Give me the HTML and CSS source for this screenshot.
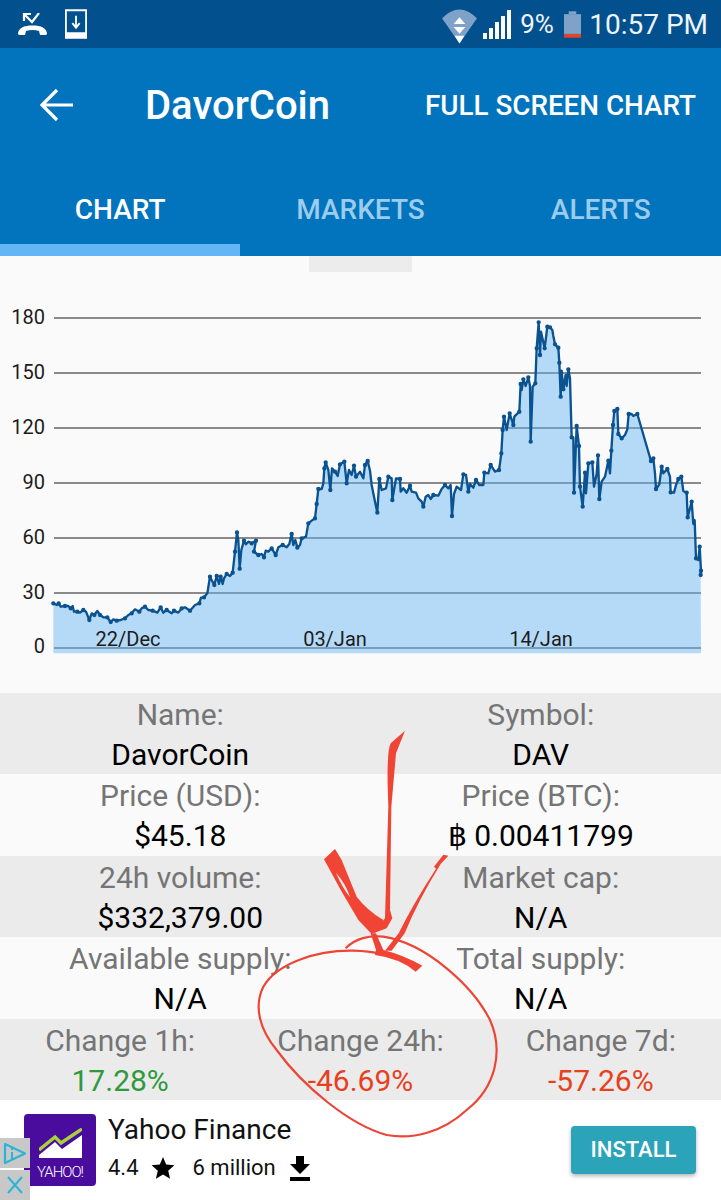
FILE: index.html
```html
<!DOCTYPE html>
<html lang="en">
<head>
<meta charset="utf-8">
<title>DavorCoin</title>
<link rel="stylesheet" href="styles.css">
</head>
<body>
<div class="page">
  <header class="status">
    <div class="status-left">
      <svg class="ic-call" viewBox="0 0 29 22"><path d="M0 21C0 15 6 12.500 14.500 12.500S29 15 29 21L28 22H22L21 18C17 16.500 12 16.500 8 18L7 22H1z" fill="#fff"/><path d="M21 0 14 9 6 1" stroke="#fff" stroke-width="2.200" fill="none"/><path d="M6 8V1h7" stroke="#fff" stroke-width="2.200" fill="none"/></svg>
      <svg class="ic-dl" viewBox="0 0 24 32"><path d="M1 1h22v30H1z" fill="none" stroke="#fff" stroke-width="2"/><path d="M1 25h22v6H1z" fill="#fff"/><path d="M12 7v12M8 15l4 5 4-5" fill="none" stroke="#fff" stroke-width="2"/></svg>
    </div>
    <div class="status-right">
      <svg class="ic-wifi" viewBox="0 0 36 38"><path d="M0 12Q18-6 36 12L18 38z" fill="#7ea2c8"/><path d="M18 11l6 7H12zM12 21h12l-6 7zM13 30h10l-5 8z" fill="#fff"/></svg>
      <svg class="ic-signal" viewBox="0 0 29 29"><path d="M0 23h4v6H0zM6 18h4v11H6zM12 12h4v17h-4zM18 6h4v23h-4zM24 0h4v29h-4z" fill="#fff"/></svg>
      <span class="st-pct">9%</span>
      <svg class="ic-batt" viewBox="0 0 18 28"><path d="M5 0h8v3H5z" fill="#7ea2c8"/><path d="M0 3h18v21H0z" fill="#7ea2c8"/><path d="M0 24h18v4H0z" fill="#e0452c"/></svg>
      <span class="st-time">10:57 PM</span>
    </div>
  </header>

  <section class="appbar">
    <div class="toolbar">
      <svg class="ic-back" viewBox="0 0 34 34"><path d="M33 17H3M17 2 2 17l15 15" fill="none" stroke="#fff" stroke-width="3.200"/></svg>
      <h1 class="title">DavorCoin</h1>
      <span class="action">FULL SCREEN CHART</span>
    </div>
    <nav class="tabs">
      <span class="tab tab-on">CHART</span>
      <span class="tab">MARKETS</span>
      <span class="tab">ALERTS</span>
    </nav>
    <div class="indicator-track"><div class="indicator"></div></div>
  </section>

  <section class="chart-wrap">
    <div class="handle"></div>
    <svg class="chart" viewBox="0 272 721 421">
      <g class="grid">
        <path d="M54 318H701M54 373H701M54 428H701M54 483H701M54 538H701M54 593H701M54 648H701"/>
      </g>
      <g transform="translate(0 300) scale(.33333)">
        <polygon class="area" points="160,1060 160,910 170,915 176,910 182,920 195,918 205,918 212,925 218,918 222,935 232,935 240,938 250,930 258,935 268,960 275,940 283,945 292,933 300,945 310,952 322,952 332,966 340,958 350,962 362,960 375,955 385,945 395,940 405,928 418,935 425,925 435,920 445,930 458,932 472,938 482,922 490,938 500,930 515,940 522,932 535,938 545,925 555,922 570,932 585,915 598,910 603,893 612,892 622,880 630,830 635,840 643,855 650,828 657,852 662,830 668,852 672,835 680,822 690,828 698,818 705,755 711,697 715,720 719,806 724,750 732,722 738,733 745,725 755,730 768,722 762,755 775,765 785,762 792,772 797,752 805,755 815,745 827,765 835,742 848,735 860,742 868,732 875,702 880,735 886,720 892,743 900,735 905,715 918,710 925,670 935,662 945,655 950,612 955,567 965,567 970,550 973,505 977,487 985,510 991,570 996,505 1005,515 1013,528 1020,493 1033,485 1040,550 1047,510 1055,525 1062,497 1068,530 1080,515 1090,535 1095,495 1103,483 1110,512 1115,555 1122,590 1132,638 1138,537 1145,570 1158,565 1165,530 1175,535 1177,600 1188,535 1200,537 1202,575 1210,565 1220,578 1230,557 1235,575 1248,578 1255,595 1265,605 1270,620 1277,590 1285,585 1292,597 1300,585 1315,587 1325,567 1335,555 1345,565 1352,555 1356,648 1362,582 1370,560 1383,570 1390,523 1398,525 1405,575 1410,552 1420,563 1428,540 1438,555 1450,555 1453,518 1465,520 1472,495 1485,515 1497,510 1500,490 1504,460 1508,390 1512,350 1520,390 1529,340 1540,375 1543,350 1558,335 1562,252 1565,270 1570,238 1577,258 1585,232 1590,258 1592,425 1598,260 1606,250 1610,145 1616,67 1620,165 1623,95 1634,145 1642,80 1650,82 1657,90 1660,108 1665,133 1675,143 1678,188 1682,290 1685,212 1690,268 1697,225 1700,258 1705,208 1710,235 1715,412 1720,412 1722,578 1730,378 1737,438 1740,560 1748,620 1755,518 1758,580 1765,490 1777,487 1782,560 1790,522 1794,466 1798,597 1805,545 1815,530 1825,482 1830,520 1834,452 1839,375 1843,333 1852,327 1855,402 1865,415 1875,405 1882,388 1886,342 1895,342 1900,348 1912,342 1953,483 1960,475 1965,520 1968,567 1978,553 1985,500 1990,520 2002,507 2010,530 2012,577 2022,578 2028,555 2035,537 2044,530 2050,573 2060,578 2063,652 2070,625 2075,605 2080,672 2084,660 2088,775 2095,780 2099,740 2103,812 2102,825 2103,1060"/>
        <polyline class="line" points="160,910 170,915 176,910 182,920 195,918 205,918 212,925 218,918 222,935 232,935 240,938 250,930 258,935 268,960 275,940 283,945 292,933 300,945 310,952 322,952 332,966 340,958 350,962 362,960 375,955 385,945 395,940 405,928 418,935 425,925 435,920 445,930 458,932 472,938 482,922 490,938 500,930 515,940 522,932 535,938 545,925 555,922 570,932 585,915 598,910 603,893 612,892 622,880 630,830 635,840 643,855 650,828 657,852 662,830 668,852 672,835 680,822 690,828 698,818 705,755 711,697 715,720 719,806 724,750 732,722 738,733 745,725 755,730 768,722 762,755 775,765 785,762 792,772 797,752 805,755 815,745 827,765 835,742 848,735 860,742 868,732 875,702 880,735 886,720 892,743 900,735 905,715 918,710 925,670 935,662 945,655 950,612 955,567 965,567 970,550 973,505 977,487 985,510 991,570 996,505 1005,515 1013,528 1020,493 1033,485 1040,550 1047,510 1055,525 1062,497 1068,530 1080,515 1090,535 1095,495 1103,483 1110,512 1115,555 1122,590 1132,638 1138,537 1145,570 1158,565 1165,530 1175,535 1177,600 1188,535 1200,537 1202,575 1210,565 1220,578 1230,557 1235,575 1248,578 1255,595 1265,605 1270,620 1277,590 1285,585 1292,597 1300,585 1315,587 1325,567 1335,555 1345,565 1352,555 1356,648 1362,582 1370,560 1383,570 1390,523 1398,525 1405,575 1410,552 1420,563 1428,540 1438,555 1450,555 1453,518 1465,520 1472,495 1485,515 1497,510 1500,490 1504,460 1508,390 1512,350 1520,390 1529,340 1540,375 1543,350 1558,335 1562,252 1565,270 1570,238 1577,258 1585,232 1590,258 1592,425 1598,260 1606,250 1610,145 1616,67 1620,165 1623,95 1634,145 1642,80 1650,82 1657,90 1660,108 1665,133 1675,143 1678,188 1682,290 1685,212 1690,268 1697,225 1700,258 1705,208 1710,235 1715,412 1720,412 1722,578 1730,378 1737,438 1740,560 1748,620 1755,518 1758,580 1765,490 1777,487 1782,560 1790,522 1794,466 1798,597 1805,545 1815,530 1825,482 1830,520 1834,452 1839,375 1843,333 1852,327 1855,402 1865,415 1875,405 1882,388 1886,342 1895,342 1900,348 1912,342 1953,483 1960,475 1965,520 1968,567 1978,553 1985,500 1990,520 2002,507 2010,530 2012,577 2022,578 2028,555 2035,537 2044,530 2050,573 2060,578 2063,652 2070,625 2075,605 2080,672 2084,660 2088,775 2095,780 2099,740 2103,812 2102,825"/>
        <path class="dots" d="M160 910h.1M176 910h.1M195 918h.1M212 925h.1M232 935h.1M250 930h.1M268 960h.1M283 945h.1M300 945h.1M322 952h.1M332 966h.1M350 962h.1M375 955h.1M395 940h.1M418 935h.1M435 920h.1M458 932h.1M482 922h.1M500 930h.1M522 932h.1M545 925h.1M570 932h.1M598 910h.1M612 892h.1M630 830h.1M643 855h.1M650 828h.1M662 830h.1M680 822h.1M698 818h.1M705 755h.1M711 697h.1M719 806h.1M732 722h.1M755 730h.1M768 722h.1M762 755h.1M775 765h.1M792 772h.1M815 745h.1M827 765h.1M848 735h.1M875 702h.1M892 743h.1M905 715h.1M925 670h.1M945 655h.1M950 612h.1M955 567h.1M973 505h.1M977 487h.1M991 570h.1M1005 515h.1M1020 493h.1M1033 485h.1M1040 550h.1M1062 497h.1M1068 530h.1M1095 495h.1M1103 483h.1M1132 638h.1M1138 537h.1M1165 530h.1M1177 600h.1M1200 537h.1M1230 557h.1M1270 620h.1M1300 585h.1M1335 555h.1M1356 648h.1M1390 523h.1M1405 575h.1M1428 540h.1M1453 518h.1M1472 495h.1M1497 510h.1M1504 460h.1M1508 390h.1M1512 350h.1M1529 340h.1M1540 375h.1M1558 335h.1M1562 252h.1M1570 238h.1M1585 232h.1M1592 425h.1M1606 250h.1M1610 145h.1M1616 67h.1M1620 165h.1M1634 145h.1M1642 80h.1M1650 82h.1M1665 133h.1M1675 143h.1M1678 188h.1M1682 290h.1M1690 268h.1M1705 208h.1M1715 412h.1M1722 578h.1M1730 378h.1M1737 438h.1M1740 560h.1M1748 620h.1M1755 518h.1M1765 490h.1M1777 487h.1M1794 466h.1M1798 597h.1M1825 482h.1M1834 452h.1M1839 375h.1M1843 333h.1M1852 327h.1M1855 402h.1M1865 415h.1M1886 342h.1M1912 342h.1M1953 483h.1M1960 475h.1M1968 567h.1M1985 500h.1M2002 507h.1M2012 577h.1M2035 537h.1M2044 530h.1M2060 578h.1M2063 652h.1M2075 605h.1M2088 775h.1M2099 740h.1M2103 812h.1M2102 825h.1"/>
      </g>
      <g class="axis">
        <text x="45" y="324" text-anchor="end">180</text>
        <text x="45" y="379" text-anchor="end">150</text>
        <text x="45" y="434" text-anchor="end">120</text>
        <text x="45" y="489" text-anchor="end">90</text>
        <text x="45" y="544" text-anchor="end">60</text>
        <text x="45" y="599" text-anchor="end">30</text>
        <text x="45" y="653" text-anchor="end">0</text>
        <text x="128" y="646" text-anchor="middle">22/Dec</text>
        <text x="335" y="646" text-anchor="middle">03/Jan</text>
        <text x="541" y="646" text-anchor="middle">14/Jan</text>
      </g>
    </svg>
  </section>

  <section class="stats">
    <div class="row row-grey cols-2">
      <div class="cell"><span class="lbl">Name:</span><span class="val">DavorCoin</span></div>
      <div class="cell"><span class="lbl">Symbol:</span><span class="val">DAV</span></div>
    </div>
    <div class="row cols-2">
      <div class="cell"><span class="lbl">Price (USD):</span><span class="val">$45.18</span></div>
      <div class="cell"><span class="lbl">Price (BTC):</span><span class="val">฿ 0.00411799</span></div>
    </div>
    <div class="row row-grey cols-2">
      <div class="cell"><span class="lbl">24h volume:</span><span class="val">$332,379.00</span></div>
      <div class="cell"><span class="lbl">Market cap:</span><span class="val">N/A</span></div>
    </div>
    <div class="row cols-2">
      <div class="cell"><span class="lbl">Available supply:</span><span class="val">N/A</span></div>
      <div class="cell"><span class="lbl">Total supply:</span><span class="val">N/A</span></div>
    </div>
    <div class="row row-grey cols-3">
      <div class="cell"><span class="lbl">Change 1h:</span><span class="val up">17.28%</span></div>
      <div class="cell"><span class="lbl">Change 24h:</span><span class="val down">-46.69%</span></div>
      <div class="cell"><span class="lbl">Change 7d:</span><span class="val down">-57.26%</span></div>
    </div>
  </section>

  <section class="ad">
    <div class="ad-icon">
      <svg class="ad-chart" viewBox="0 0 43 30"><path d="M0 30V27L16 14l7 7L43 7v23z" fill="#fff"/><path d="M0 22 16 9l6 6L43 1" fill="none" stroke="#a8d13c" stroke-width="3.500"/></svg>
      <span class="ad-brand">YAHOO!</span>
    </div>
    <div class="ad-body">
      <div class="ad-title">Yahoo Finance</div>
      <div class="ad-meta">
        <span>4.4</span>
        <svg class="ad-star" viewBox="0 0 24 24"><path d="M12 1l3.200 7.600 8.200.7-6.200 5.400 1.900 8L12 18.400 4.900 22.700l1.900-8L.6 9.300l8.200-.7z"/></svg>
        <span class="ad-count">6 million</span>
        <svg class="ad-down" viewBox="0 0 20 25"><path d="M6 0h8v8h6L10 18 0 8h6zM0 21h20v4H0z"/></svg>
      </div>
    </div>
    <div class="ad-btn">INSTALL</div>
  </section>

  <div class="adchoice adchoice-i">
    <svg viewBox="0 0 24 23"><path d="M2 2 22 11.500 2 21z" fill="none" stroke="#29b6d6" stroke-width="2.200" stroke-linejoin="round"/><path d="M9 10v7" stroke="#29b6d6" stroke-width="2"/><circle cx="9" cy="7" r="1.200" fill="#29b6d6"/></svg>
  </div>
  <div class="adchoice adchoice-x">
    <svg viewBox="0 0 16 18"><path d="M1 1l14 16M15 1 1 17" fill="none" stroke="#29b6d6" stroke-width="2"/></svg>
  </div>

  <svg class="scribble" viewBox="0 0 721 1200">
    <g transform="translate(240 720) scale(.33333)">
      <path class="ink" d="M495 32 452 70Q441 90 443 200L445 260 435 595 400 640 440 625 457 595 450 570 454 260 468 100z"/>
      <path class="ink" fill-rule="evenodd" d="M252 418 285 387 305 420 350 530Q380 570 430 600L420 630 395 642 355 600Q300 510 252 418zM288 458Q305 500 330 532 320 495 288 458z"/>
      <path class="ink" d="M392 640 408 690 405 705Q480 715 527 755L547 737Q490 705 430 690L408 640z"/>
      <path class="ink" d="M625 407 610 404 582 440 588 446Q520 550 476 640L435 692 455 692 494 640Q535 540 602 432z"/>
      <path class="ring" d="M317 685C345 655 390 645 430 650 560 670 700 800 750 900 790 990 770 1100 680 1170 610 1235 520 1260 440 1245 330 1215 190 1100 110 990 60 930 40 860 70 800 110 730 230 690 340 692 370 693 395 695 415 700"/>
    </g>
  </svg>
</div>
</body>
</html>
```
FILE: styles.css
```css
* { box-sizing: border-box; }
html, body { margin: 0; padding: 0; }
body { background: #fff; font-family: Roboto, "Noto Sans", sans-serif; }
.page { position: relative; width: 721px; height: 1200px; overflow: hidden; }

.status { height: 48px; background: #03508f; display: flex; justify-content: space-between; align-items: center; color: #eef4fa; }
.status-left { display: flex; align-items: center; gap: 18px; padding-left: 18px; }
.ic-call { width: 29px; height: 22px; }
.ic-dl { width: 22px; height: 32px; margin-top: -1px; }
.status-right { display: flex; align-items: center; padding-right: 13px; }
.ic-wifi { width: 35px; height: 38px; margin-right: 6px; margin-top: 2px; }
.ic-signal { width: 29px; height: 29px; margin-top: 1px; }
.st-pct { font-size: 26px; margin-left: 8px; width: 35px; font-weight: 400; }
.ic-batt { width: 17px; height: 27px; margin-left: 9px; }
.st-time { font-size: 28px; margin-left: 8px; font-weight: 400; }

.appbar { height: 208px; background: #0274bd; display: flex; flex-direction: column; }
.toolbar { height: 114px; display: flex; align-items: center; color: #fff; }
.ic-back { width: 34px; height: 34px; margin-left: 40px; }
.title { margin: 0 0 0 71px; font-size: 40px; font-weight: 500; flex: 1; }
.action { font-size: 27.800px; font-weight: 500; padding-right: 25px; }
.tabs { display: grid; grid-template-columns: repeat(3, 1fr); height: 82px; align-items: center; padding-top: 12px; }
.tab { text-align: center; font-size: 28px; font-weight: 500; color: #9cccec; }
.tab-on { color: #fff; }
.indicator-track { height: 12px; }
.indicator { width: 240px; height: 12px; background: #64b5f6; }

.chart-wrap { height: 437px; background: #fafafa; display: flex; flex-direction: column; align-items: center; }
.handle { width: 103px; height: 16px; background: #ececec; }
.chart { display: block; width: 721px; height: 421px; }
.grid path { stroke: #8a8a8a; stroke-width: 2; fill: none; }
.area { fill: rgba(100, 181, 246, .46); }
.line { fill: none; stroke: #0a5290; stroke-width: 7; stroke-linejoin: round; }
.dots { fill: none; stroke: #0a5290; stroke-width: 13; stroke-linecap: round; }
.axis text { font-size: 20px; fill: #1c1c1c; font-family: Roboto, sans-serif; }

.stats { display: flex; flex-direction: column; }
.row { height: 81.400px; display: grid; background: #fafafa; }
.row-grey { background: #ebebeb; }
.cols-2 { grid-template-columns: 1fr 1fr; }
.cols-3 { grid-template-columns: 1fr 1fr 1fr; }
.cell { display: flex; flex-direction: column; align-items: center; padding-top: 3px; }
.lbl { font-size: 30px; line-height: 37px; color: #757575; white-space: nowrap; }
.val { font-size: 30px; line-height: 41px; margin-top: 1px; color: #000; white-space: nowrap; }
.up { color: #2e9a3c; }
.down { color: #e8401c; }

.ad { height: 100px; background: #fff; display: flex; align-items: center; padding: 0 25px 0 24px; }
.ad-icon { width: 72px; height: 72px; background: #4a0c9c; border-radius: 4px; display: flex; flex-direction: column; align-items: center; }
.ad-chart { width: 43px; height: 30px; margin: 14px 0 0 0; display: block; }
.ad-brand { color: #fff; font-size: 15px; line-height: 16px; margin-top: 6px; letter-spacing: -1px; font-weight: 300; }
.ad-body { flex: 1; margin-left: 12px; color: #111; }
.ad-title { font-size: 28px; line-height: 34px; }
.ad-meta { display: flex; align-items: center; font-size: 22px; line-height: 36px; margin-top: 3px; }
.ad-star { width: 24px; height: 24px; margin-left: 12px; }
.ad-count { margin-left: 18px; }
.ad-down { width: 20px; height: 25px; margin-left: 14px; }
.ad-btn { width: 125px; height: 48px; border-radius: 4px; background: #2ba3b8; color: #fff; font-size: 22px; font-weight: 500; display: flex; align-items: center; justify-content: center; box-shadow: 0 2px 4px rgba(0, 0, 0, .3); }

.adchoice { position: absolute; left: 0; width: 30px; height: 30px; background: #c8c8c8; display: flex; align-items: center; justify-content: center; }
.adchoice-i { top: 1138px; }
.adchoice-x { top: 1170px; }
.adchoice-i svg { width: 24px; height: 23px; }
.adchoice-x svg { width: 16px; height: 18px; }

.scribble { position: absolute; left: 0; top: 0; width: 721px; height: 1200px; pointer-events: none; }
.ink { fill: #f04434; }
.ring { fill: none; stroke: #ee4435; stroke-width: 6.500; }
```
